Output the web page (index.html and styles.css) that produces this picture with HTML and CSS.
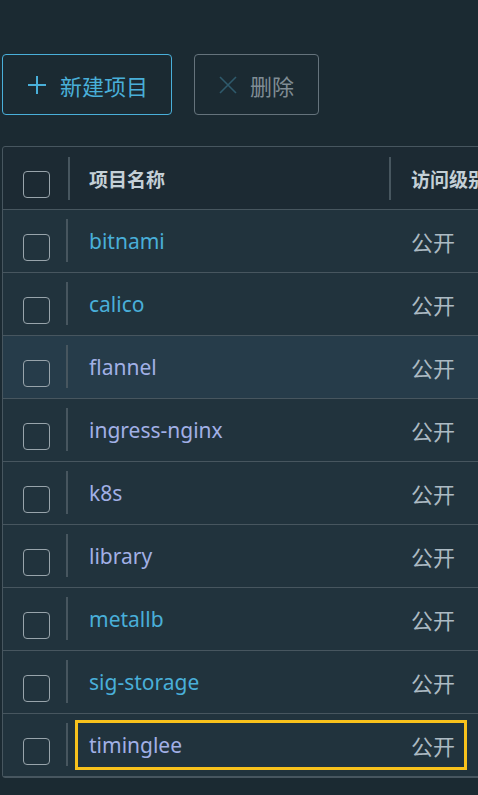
FILE: index.html
```html
<!DOCTYPE html>
<html lang="zh-CN">
<head>
    <meta charset="UTF-8">
    <meta name="viewport" content="width=device-width, initial-scale=1.0">
    <title>项目</title>
    <link rel="stylesheet" href="styles.css">
</head>
<body>
    <div class="toolbar">
        <button class="btn btn-primary">
            <svg class="icon" viewBox="0 0 20 20"><path d="M10 1v18M1 10h18" /></svg>
            <span>新建项目</span>
        </button>
        <button class="btn btn-disabled">
            <svg class="icon icon-x" viewBox="0 0 20 20"><path d="M2 2l16 16M18 2L2 18" /></svg>
            <span>删除</span>
        </button>
    </div>

    <div class="grid">
        <div class="grid-head">
            <div class="cell-check"><span class="checkbox"></span></div>
            <div class="head-cell">项目名称</div>
            <div class="head-cell">访问级别</div>
        </div>

        <div class="grid-row">
            <div class="cell-check"><span class="checkbox"></span></div>
            <div class="cell-name"><a class="link">bitnami</a></div>
            <div class="cell-access">公开</div>
        </div>
        <div class="grid-row">
            <div class="cell-check"><span class="checkbox"></span></div>
            <div class="cell-name"><a class="link">calico</a></div>
            <div class="cell-access">公开</div>
        </div>
        <div class="grid-row hover">
            <div class="cell-check"><span class="checkbox"></span></div>
            <div class="cell-name"><a class="link visited">flannel</a></div>
            <div class="cell-access">公开</div>
        </div>
        <div class="grid-row">
            <div class="cell-check"><span class="checkbox"></span></div>
            <div class="cell-name"><a class="link visited">ingress-nginx</a></div>
            <div class="cell-access">公开</div>
        </div>
        <div class="grid-row">
            <div class="cell-check"><span class="checkbox"></span></div>
            <div class="cell-name"><a class="link visited">k8s</a></div>
            <div class="cell-access">公开</div>
        </div>
        <div class="grid-row">
            <div class="cell-check"><span class="checkbox"></span></div>
            <div class="cell-name"><a class="link visited">library</a></div>
            <div class="cell-access">公开</div>
        </div>
        <div class="grid-row">
            <div class="cell-check"><span class="checkbox"></span></div>
            <div class="cell-name"><a class="link">metallb</a></div>
            <div class="cell-access">公开</div>
        </div>
        <div class="grid-row">
            <div class="cell-check"><span class="checkbox"></span></div>
            <div class="cell-name"><a class="link">sig-storage</a></div>
            <div class="cell-access">公开</div>
        </div>
        <div class="grid-row focused">
            <div class="cell-check"><span class="checkbox"></span></div>
            <div class="cell-name"><a class="link visited">timinglee</a></div>
            <div class="cell-access">公开</div>
            <span class="focus-ring"></span>
        </div>
    </div>
</body>
</html>
```

FILE: styles.css
```css
html, body {
    margin: 0;
    height: 100%;
    overflow: hidden;
}
body {
    background-color: #1b2a32;
    font-family: "Noto Sans", "Noto Sans CJK SC", sans-serif;
    color: #acbac3;
}
.toolbar {
    display: flex;
    gap: 22px;
    padding: 54px 0 0 2px;
}
.btn {
    display: flex;
    align-items: center;
    gap: 13px;
    height: 61px;
    padding: 0 23px 0 24px;
    background: transparent;
    border: 1px solid;
    border-radius: 4px;
    font-family: inherit;
    font-size: 22px;
    white-space: nowrap;
}
.btn-primary {
    border-color: #49afd9;
    color: #49afd9;
}
.btn-disabled {
    border-color: #65737c;
    color: #808d95;
    padding: 0 24px 0 23px;
    gap: 12px;
}
.icon {
    width: 20px;
    height: 20px;
    flex: none;
    fill: none;
    stroke: #49afd9;
    stroke-width: 2;
}
.icon-x {
    stroke: #2f5a6c;
    stroke-width: 1.6;
}
.grid {
    margin: 31px 0 0 2px;
    width: 560px;
    border: 1px solid #47565f;
    border-radius: 3px;
    background-color: #1c2a33;
}
.grid-head {
    display: grid;
    grid-template-columns: 65px 321px 1fr;
    height: 62px;
    border-bottom: 1px solid #47565f;
}
.grid-row {
    position: relative;
    display: grid;
    grid-template-columns: 63px 323px 1fr;
    height: 62px;
    background-color: #21333d;
    border-bottom: 1px solid #47565f;
}
.grid-row.hover {
    background-color: #263c4a;
}
.cell-check {
    display: flex;
    align-items: center;
    padding: 12px 0 0 20px;
}
.checkbox {
    width: 25px;
    height: 25px;
    border: 1px solid #98a4ab;
    border-radius: 4px;
}
.head-cell {
    display: flex;
    align-items: center;
    margin: 10px 0 9px;
    padding-left: 19px;
    border-left: 2px solid #47565f;
    font-size: 19px;
    font-weight: bold;
    color: #c4d0d7;
    white-space: nowrap;
}
.head-cell + .head-cell {
    padding-left: 20px;
}
.cell-name {
    display: flex;
    align-items: center;
    margin: 9px 0 10px;
    padding-left: 21px;
    border-left: 2px solid #47565f;
}
.cell-access {
    display: flex;
    align-items: center;
    padding-left: 22px;
    font-size: 22px;
}
.link {
    font-size: 21px;
    color: #49afd9;
}
.link.visited {
    color: #a1b0e6;
}
.focus-ring {
    position: absolute;
    left: 72px;
    top: 6px;
    width: 386px;
    height: 44px;
    border: 3px solid #f8c21c;
}
```
